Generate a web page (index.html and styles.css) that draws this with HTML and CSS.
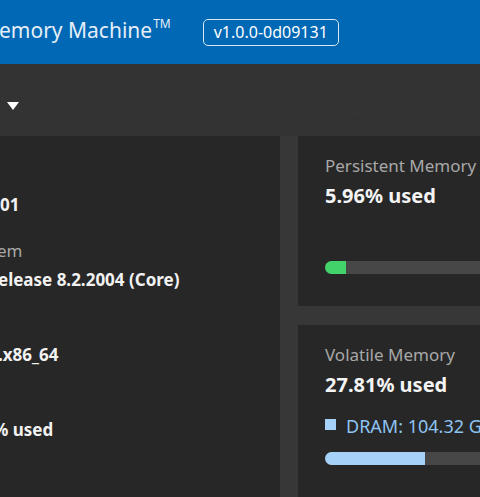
FILE: index.html
```html
<!DOCTYPE html>
<html lang="en">
<head>
<meta charset="utf-8">
<title>Memory Machine</title>
<link rel="stylesheet" href="styles.css">
</head>
<body>
<header class="topbar">
  <h1 class="title">emory Machine<sup class="tm">TM</sup></h1>
  <span class="badge">v1.0.0-0d09131</span>
</header>
<div class="toolbar">
  <span class="caret"></span>
</div>
<main class="grid">
  <section class="card info">
    <div class="row">
      <div class="label">&nbsp;</div>
      <div class="value v-host">01</div>
    </div>
    <div class="row">
      <div class="label l-os">em</div>
      <div class="value v-os">elease 8.2.2004 (Core)</div>
    </div>
    <div class="row">
      <div class="label">&nbsp;</div>
      <div class="value v-kernel">.x86_64</div>
    </div>
    <div class="row">
      <div class="label">&nbsp;</div>
      <div class="value v-cpu">% used</div>
    </div>
  </section>
  <div class="stack">
    <section class="card mem mem-pm">
      <div class="mem-label">Persistent Memory</div>
      <div class="mem-value">5.96% used</div>
      <div class="legend legend-empty"></div>
      <div class="bar"><div class="fill fill-pm" style="width:21px"></div></div>
    </section>
    <section class="card mem mem-vm">
      <div class="mem-label">Volatile Memory</div>
      <div class="mem-value">27.81% used</div>
      <div class="legend"><span class="swatch"></span><span class="legend-text">DRAM: 104.32 GB</span></div>
      <div class="bar"><div class="fill fill-dram" style="width:100px"></div></div>
    </section>
  </div>
</main>
</body>
</html>
```
FILE: styles.css
```css
* { box-sizing: border-box; }
html, body {
  margin: 0;
  padding: 0;
  width: 480px;
  height: 497px;
  overflow: hidden;
}
body {
  background: #333333;
  font-family: "Noto Sans", "DejaVu Sans", sans-serif;
  color: #f4f4f4;
  white-space: nowrap;
}
.topbar {
  height: 64px;
  background: #0068b5;
  display: flex;
  align-items: center;
}
.title {
  margin: -1px 0 0 -1px;
  font-size: 21px;
  font-weight: 400;
  color: #e6eef7;
  line-height: 28px;
}
.tm {
  font-size: 12px;
  vertical-align: 0;
  position: relative;
  top: -10px;
  margin-left: 1px;
}
.badge {
  margin-left: 32px;
  height: 27px;
  padding: 0 10px;
  border: 1.5px solid #dce7f2;
  border-radius: 5px;
  font-size: 16px;
  font-weight: 400;
  line-height: 24px;
  color: #ffffff;
}
.toolbar {
  height: 72px;
  padding: 38px 0 0 7px;
  background:
    linear-gradient(152deg, transparent 49.6%, rgba(255,255,255,0.025) 50%, transparent 50.4%) 90px 0 / 200px 72px no-repeat,
    linear-gradient(28deg, transparent 49.6%, rgba(255,255,255,0.025) 50%, transparent 50.4%) 230px 0 / 200px 72px no-repeat;
}
.caret {
  display: block;
  width: 0;
  height: 0;
  border-left: 6.5px solid transparent;
  border-right: 6.5px solid transparent;
  border-top: 8px solid #ffffff;
}
.grid {
  display: grid;
  grid-template-columns: 280px 1fr;
  column-gap: 18px;
  height: 361px;
  background: #373737;
}
.card {
  background: #272727;
}
.info {
  padding-top: 29px;
  display: flex;
  flex-direction: column;
  gap: 23px;
}
.row .label {
  font-size: 17px;
  line-height: 22px;
  color: #a8a8a8;
}
.row .value {
  margin-top: 6px;
  font-size: 17px;
  line-height: 24px;
  font-weight: 700;
  color: #f2f2f2;
}
.l-os { margin-left: -3px; }
.v-os { margin-left: -2px; }
.v-kernel { margin-left: -2px; }
.v-cpu { margin-left: -7px; }
.stack {
  display: flex;
  flex-direction: column;
  gap: 19px;
}
.mem {
  padding: 19px 0 0 27px;
}
.mem-pm { height: 170px; }
.mem-vm { flex: 1; }
.mem-label {
  font-size: 17px;
  line-height: 22px;
  color: #a8a8a8;
}
.mem-value {
  margin-top: 5px;
  font-size: 20px;
  line-height: 28px;
  font-weight: 700;
  color: #f4f4f4;
}
.legend {
  margin-top: 17px;
  height: 20px;
  display: flex;
  align-items: flex-start;
  gap: 10px;
}
.legend-empty { height: 18px; }
.swatch {
  flex: none;
  width: 11px;
  height: 11px;
  margin-top: 3px;
  background: #a6d2fa;
}
.legend-text {
  font-size: 18px;
  line-height: 20px;
  color: #8ec4f2;
}
.bar {
  margin-top: 16px;
  height: 13px;
  background: #474747;
  border-radius: 7px 0 0 7px;
  overflow: hidden;
}
.fill {
  height: 100%;
}
.fill-pm { background: #42d46b; }
.fill-dram { background: #a6d2fa; }
```
